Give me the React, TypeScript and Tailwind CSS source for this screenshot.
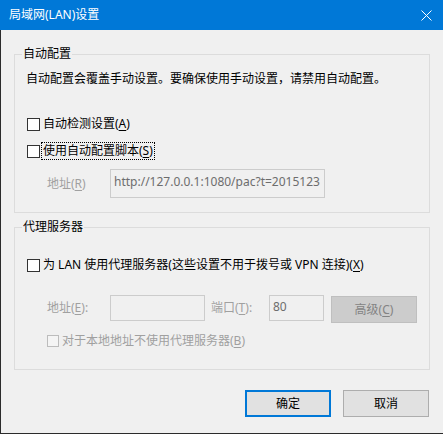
import React from "react";

const Check = ({ disabled }: { disabled?: boolean }) => (
  <span
    className={
      disabled
        ? "block w-[12px] h-[12px] border border-[#bcbcbc] bg-[#f4f4f4] shrink-0"
        : "block w-[13px] h-[13px] border border-[#333333] bg-white shrink-0"
    }
  />
);

const Key = ({ k }: { k: string }) => <span className="underline underline-offset-[2px]">{k}</span>;

export default function App() {
  return (
    <div className="w-[443px] h-[434px] bg-[#f0f0f0] flex flex-col overflow-hidden text-[12px] leading-[16px] text-black font-['Noto_Sans','Noto_Sans_CJK_SC',sans-serif]">
      {/* 标题栏 */}
      <div className="h-[30px] shrink-0 bg-[#0078d7] flex items-center justify-between pl-[9px] pr-[11px] text-white">
        <span>局域网(LAN)设置</span>
        <svg width="11" height="11" viewBox="0 0 11 11" className="block">
          <path d="M0.5 0.5 L10.5 10.5 M10.5 0.5 L0.5 10.5" stroke="white" strokeWidth="1" />
        </svg>
      </div>

      <div className="flex-1 flex flex-col border-l border-b border-[#2b2b2b]">
        {/* 自动配置 */}
        <fieldset className="ml-[13px] w-[416px] mt-[16px] border border-[#dcdcdc] pb-[14px]">
          <legend className="ml-[7px] px-px leading-[16px]">自动配置</legend>
          <div className="pl-[11px] flex flex-col">
            <p className="mt-[9px]">自动配置会覆盖手动设置。要确保使用手动设置，请禁用自动配置。</p>
            <div className="mt-[27px] h-[20px] flex items-center pl-px">
              <Check />
              <span className="ml-px px-px border border-transparent">
                自动检测设置(<Key k="A" />)
              </span>
            </div>
            <div className="mt-[7px] h-[20px] flex items-center pl-px">
              <Check />
              <span className="ml-px px-px border border-dotted border-black">
                使用自动配置脚本(<Key k="S" />)
              </span>
            </div>
            <div className="mt-[8px] flex items-center">
              <span className="ml-[21px] w-[63px] text-[#a0a0a0]">
                地址(<Key k="R" />)
              </span>
              <div className="w-[215px] h-[29px] border border-[#cccccc] bg-[#f0f0f0] pl-[3px] pt-[4px] text-[#6d6d6d] overflow-hidden whitespace-nowrap">
                http://127.0.0.1:1080/pac?t=2015123
              </div>
            </div>
          </div>
        </fieldset>

        {/* 代理服务器 */}
        <fieldset className="ml-[13px] w-[416px] mt-[6px] border border-[#dcdcdc] pb-[18px]">
          <legend className="ml-[7px] px-px leading-[16px]">代理服务器</legend>
          <div className="pl-[11px] flex flex-col">
            <div className="mt-[20px] h-[20px] flex items-center pl-px">
              <Check />
              <span className="ml-px px-px border border-transparent">
                为 LAN 使用代理服务器(这些设置不用于拨号或 VPN 连接)(<Key k="X" />)
              </span>
            </div>
            <div className="mt-[20px] h-[28px] flex items-start">
              <span className="ml-[21px] w-[63px] h-[26px] flex items-center text-[#a0a0a0]">
                <span>
                  地址(<Key k="E" />):
                </span>
              </span>
              <div className="w-[95px] h-[26px] border border-[#cccccc] bg-[#f0f0f0]" />
              <span className="ml-[6px] w-[58px] h-[26px] flex items-center text-[#a0a0a0]">
                <span>
                  端口(<Key k="T" />):
                </span>
              </span>
              <div className="w-[55px] h-[26px] border border-[#cccccc] bg-[#f0f0f0] pl-[3px] pt-[3px] text-[#6d6d6d]">
                80
              </div>
              <div className="ml-[7px] mt-px w-[86px] h-[27px] border border-[#bfbfbf] bg-[#cccccc] flex items-center justify-center text-[#838383]">
                <span>
                  高级(<Key k="C" />)
                </span>
              </div>
            </div>
            <div className="mt-[8px] h-[20px] flex items-center ml-[21px]">
              <Check disabled />
              <span className="ml-px px-px border border-transparent text-[#a0a0a0]">
                对于本地地址不使用代理服务器(<Key k="B" />)
              </span>
            </div>
          </div>
        </fieldset>

        {/* 按钮 */}
        <div className="mt-[20px] flex justify-end gap-[12px] pr-[14px]">
          <button className="w-[86px] h-[27px] border-2 border-[#0078d7] bg-[#e1e1e1] flex items-center justify-center">
            确定
          </button>
          <button className="w-[86px] h-[27px] border border-[#adadad] bg-[#e1e1e1] flex items-center justify-center">
            取消
          </button>
        </div>
      </div>
    </div>
  );
}
